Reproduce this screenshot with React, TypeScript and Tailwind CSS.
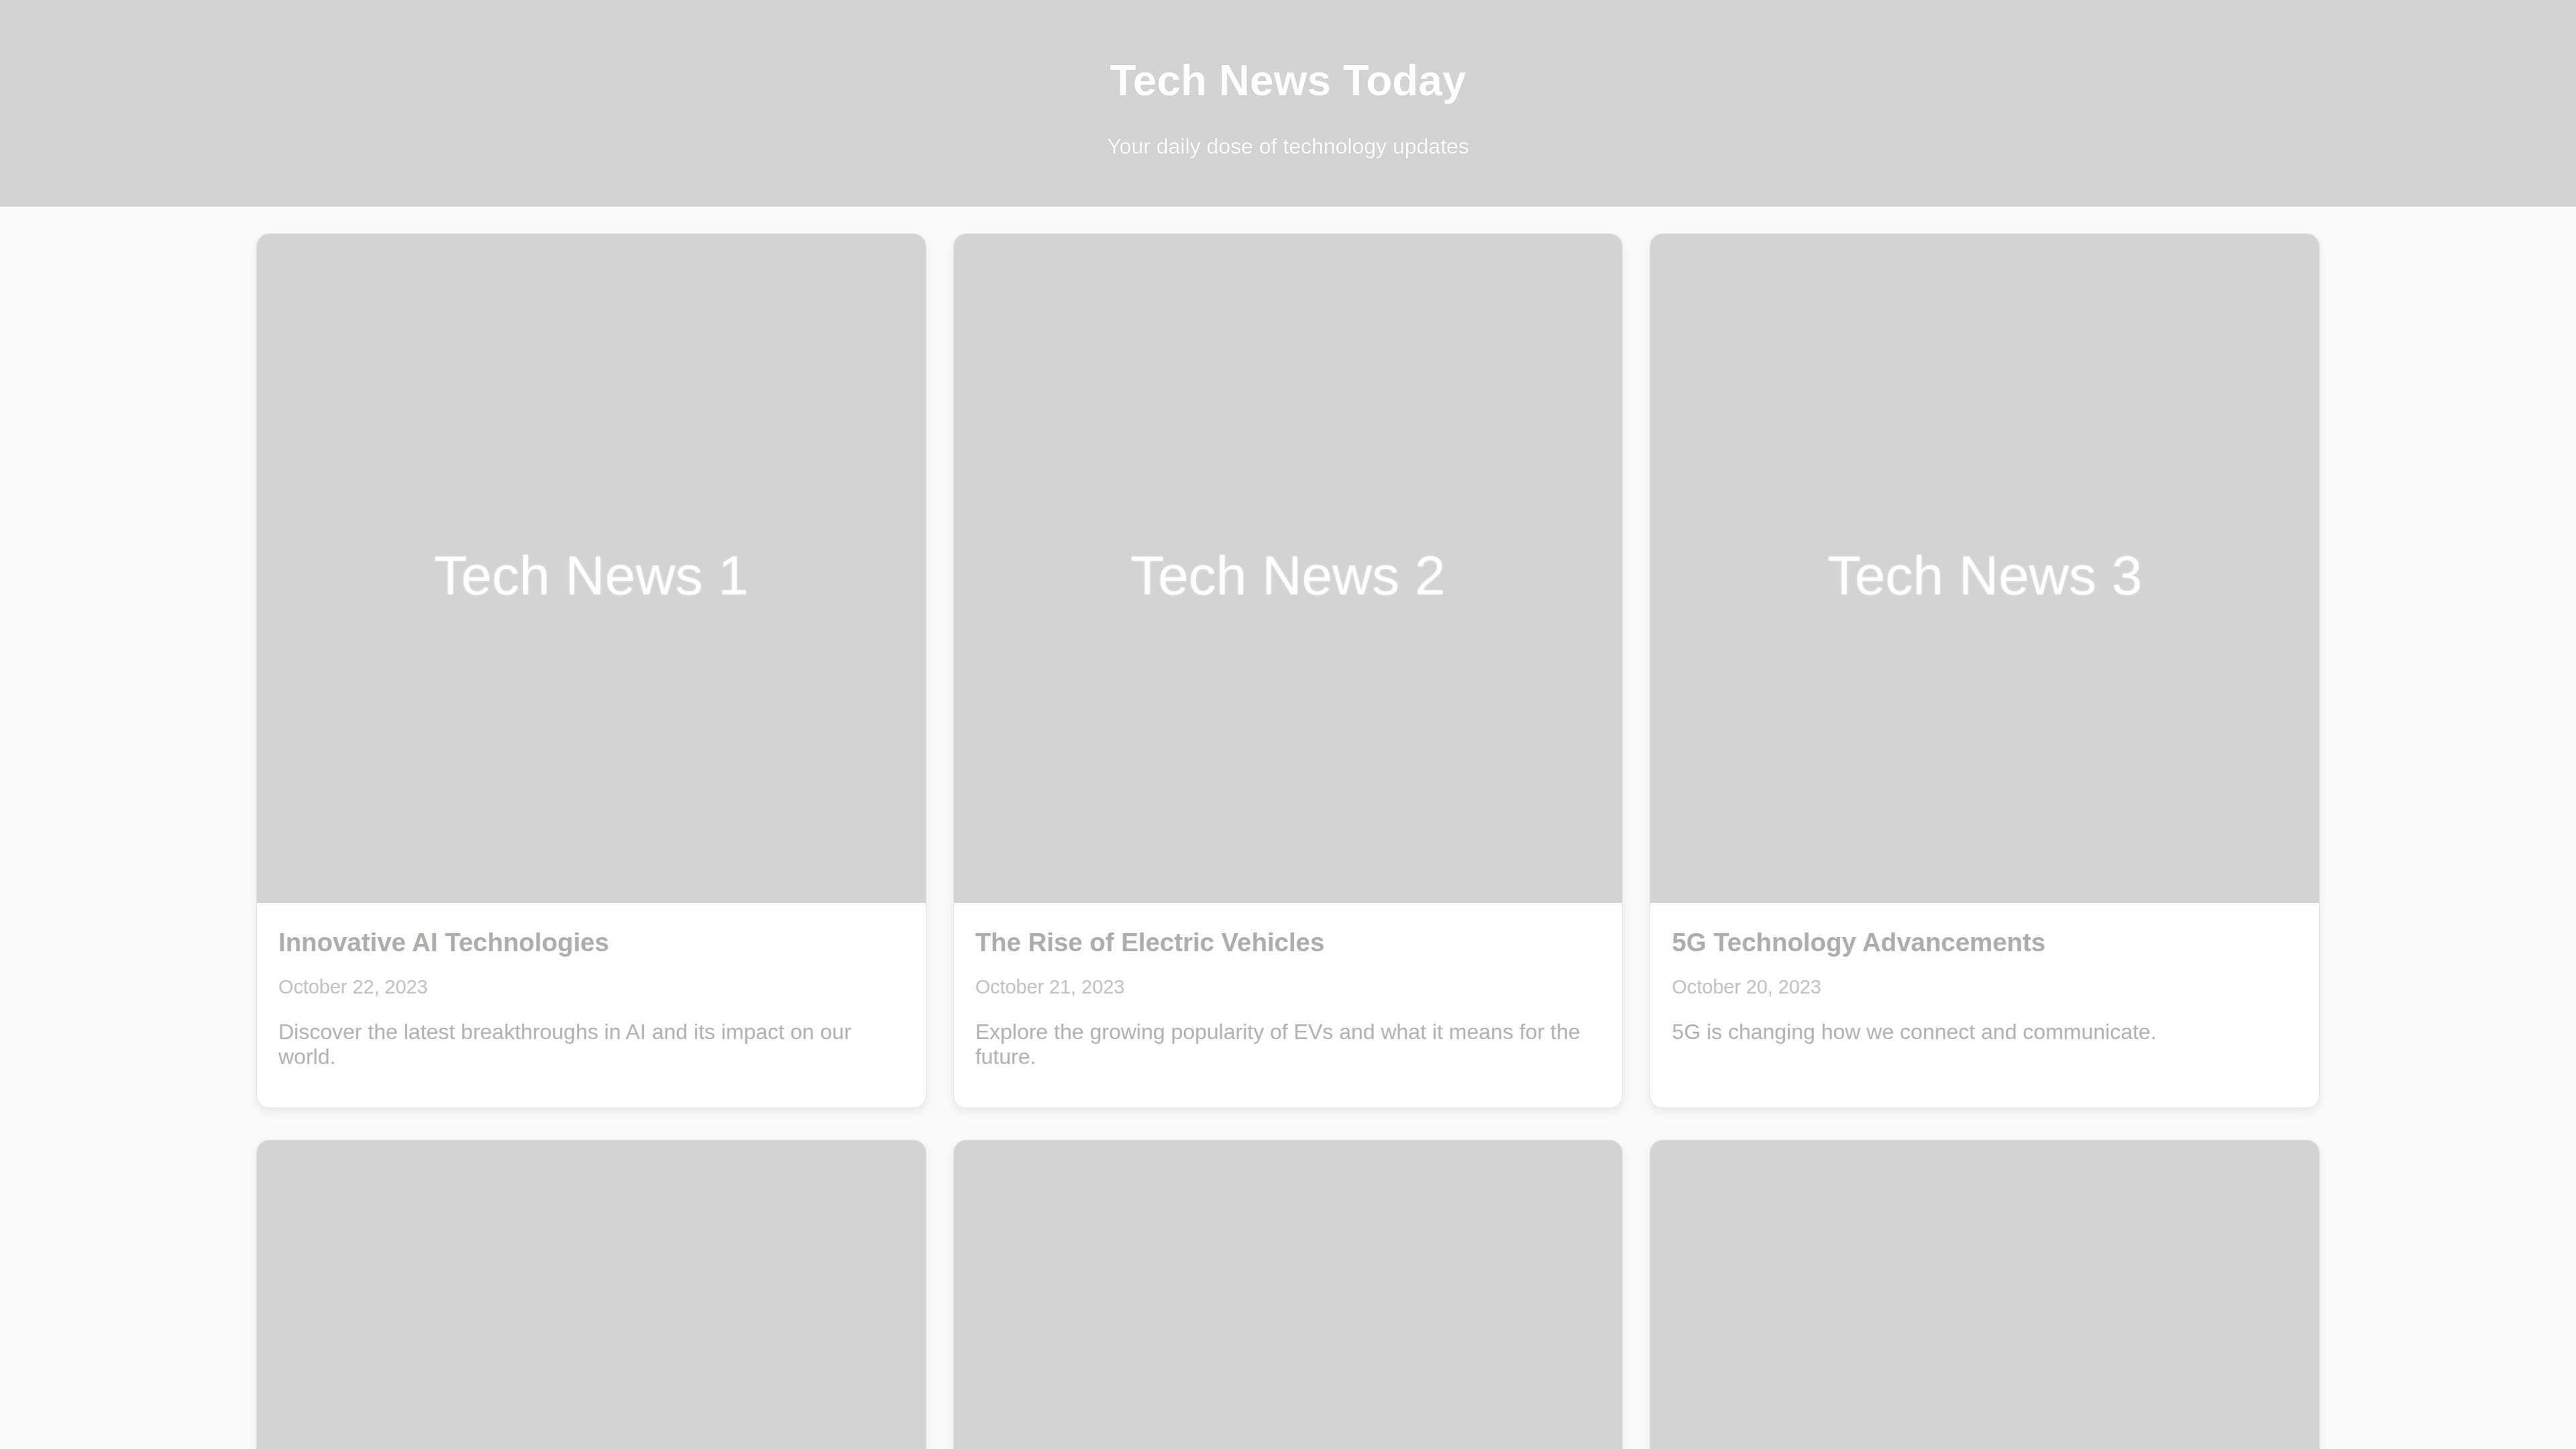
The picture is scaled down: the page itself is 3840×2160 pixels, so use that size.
const articles = [
  {
    id: 1,
    title: "Innovative AI Technologies",
    date: "October 22, 2023",
    summary: "Discover the latest breakthroughs in AI and its impact on our world.",
  },
  {
    id: 2,
    title: "The Rise of Electric Vehicles",
    date: "October 21, 2023",
    summary: "Explore the growing popularity of EVs and what it means for the future.",
  },
  {
    id: 3,
    title: "5G Technology Advancements",
    date: "October 20, 2023",
    summary: "5G is changing how we connect and communicate.",
  },
  {
    id: 4,
    title: "Quantum Computing Explained",
    date: "October 19, 2023",
    summary: "A simple look at how quantum computers work.",
  },
  {
    id: 5,
    title: "The Future of Wearables",
    date: "October 18, 2023",
    summary: "Smart devices are getting smaller and smarter.",
  },
  {
    id: 6,
    title: "Cybersecurity Trends",
    date: "October 17, 2023",
    summary: "How companies are protecting data in a connected world.",
  },
];

interface CardProps {
  id: number;
  title: string;
  date: string;
  summary: string;
}

const NewsCard = ({ id, title, date, summary }: CardProps) => {
  return (
    <article className="overflow-hidden rounded-[19px] border border-[#e3e3e3] bg-white shadow-[0_6px_14px_rgba(0,0,0,0.07)]">
      <div className="flex aspect-square items-center justify-center bg-[#d3d3d3] pt-[20px]">
        <span className="text-[82px] leading-[1.15] text-white [text-shadow:0_0_3px_rgba(255,255,255,0.9),0_0_1px_rgba(0,0,0,0.3)]">
          Tech News {id}
        </span>
      </div>
      <div className="px-[32px] pt-[37px] pb-[57px]">
        <h2 className="text-[38.4px] font-bold leading-[1.15] text-[#adadad]">{title}</h2>
        <p className="mt-[28px] text-[28.8px] leading-[1.15] text-[#c2c2c2]">{date}</p>
        <p className="mt-[32px] text-[32px] leading-[1.15] text-[#b2b2b2]">{summary}</p>
      </div>
    </article>
  );
};

export default function App() {
  return (
    <div className="min-h-screen bg-[#fafafa] font-['Liberation_Sans',Arial,sans-serif]">
      <header className="bg-[#d3d3d3] pt-[84px] pb-[72px] text-center text-white">
        <h1 className="text-[64px] font-bold leading-[1.15] [text-shadow:0_0_1px_rgba(0,0,0,0.2)]">
          Tech News Today
        </h1>
        <p className="mt-[42px] text-[32px] leading-[1.15] [text-shadow:0_0_1px_rgba(0,0,0,0.25)]">
          Your daily dose of technology updates
        </p>
      </header>

      <main className="mx-auto grid w-[3076px] grid-cols-3 gap-x-[40px] gap-y-[47px] pt-[40px] pb-[60px]">
        {articles.map((a) => (
          <NewsCard key={a.id} {...a} />
        ))}
      </main>
    </div>
  );
}
